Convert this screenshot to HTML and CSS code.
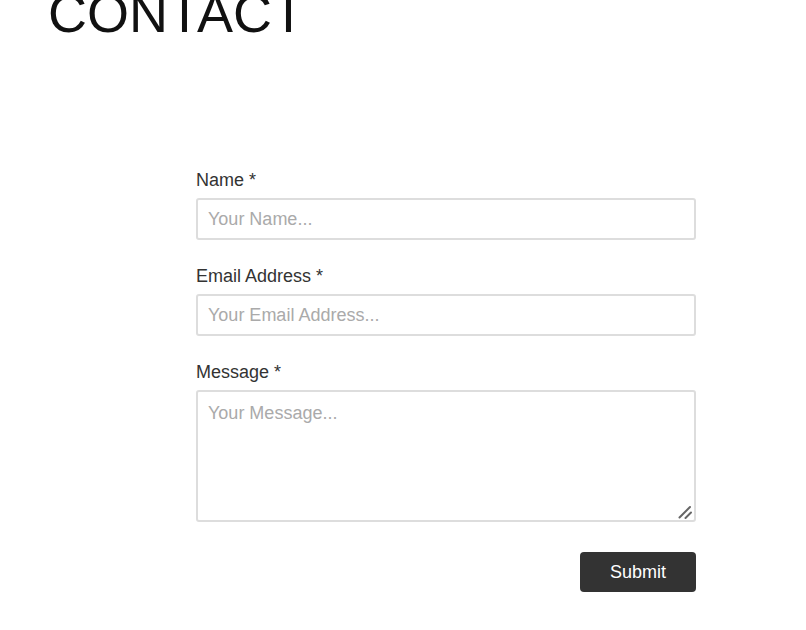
FILE: index.html
```
<!DOCTYPE html>
<html lang="en">
<head>
<meta charset="utf-8">
<title>Contact</title>
<link rel="stylesheet" href="styles.css">
</head>
<body>
<main class="page">
  <h1 class="title">CONTACT</h1>
  <form class="form">
    <div class="field">
      <label class="label" for="name">Name *</label>
      <input class="input" id="name" type="text" placeholder="Your Name...">
    </div>
    <div class="field">
      <label class="label" for="email">Email Address *</label>
      <input class="input" id="email" type="email" placeholder="Your Email Address...">
    </div>
    <div class="field">
      <label class="label" for="msg">Message *</label>
      <div class="textarea-wrap">
        <textarea class="input textarea" id="msg" placeholder="Your Message..."></textarea>
        <svg class="grip" width="14" height="14" viewBox="0 0 14 14" aria-hidden="true">
          <line x1="1.5" y1="12.5" x2="12" y2="2" stroke="#666" stroke-width="2" stroke-linecap="round"/>
          <line x1="7.5" y1="13" x2="13" y2="7.5" stroke="#666" stroke-width="2" stroke-linecap="round"/>
        </svg>
      </div>
    </div>
    <div class="actions">
      <button class="submit" type="button">Submit</button>
    </div>
  </form>
</main>
</body>
</html>
```
FILE: styles.css
```
html, body {
  margin: 0;
  padding: 0;
  background: #fff;
}
body {
  font-family: "Liberation Sans", Arial, sans-serif;
  color: #333;
  overflow: hidden;
}
.page {
  padding-left: 48px;
}
.title {
  margin: -14px 0 0 0;
  font-size: 54px;
  line-height: 54px;
  font-weight: 400;
  color: #111;
}
.form {
  width: 500px;
  margin: 128px 0 0 148px;
  display: flex;
  flex-direction: column;
  gap: 24px;
}
.field {
  display: flex;
  flex-direction: column;
  gap: 7px;
}
.label {
  font-size: 18px;
  line-height: 22px;
  padding-top: 1px;
  color: #333;
}
.input {
  box-sizing: border-box;
  width: 100%;
  height: 42px;
  border: 2px solid #ddd;
  border-radius: 3px;
  padding: 8px 10px;
  font-family: inherit;
  font-size: 18px;
  line-height: 22px;
  color: #333;
  background: #fff;
  outline: none;
  margin: 0;
}
.input::placeholder {
  color: #aaa;
}
.textarea-wrap {
  position: relative;
}
.textarea {
  height: 132px;
  padding-top: 10px;
  resize: none;
  display: block;
}
.grip {
  position: absolute;
  right: 4px;
  bottom: 3px;
}
.actions {
  display: flex;
  justify-content: flex-end;
  margin-top: 6px;
}
.submit {
  width: 116px;
  height: 40px;
  border: none;
  border-radius: 4px;
  background: #333;
  color: #fff;
  font-family: inherit;
  font-size: 18px;
  cursor: pointer;
}
```
